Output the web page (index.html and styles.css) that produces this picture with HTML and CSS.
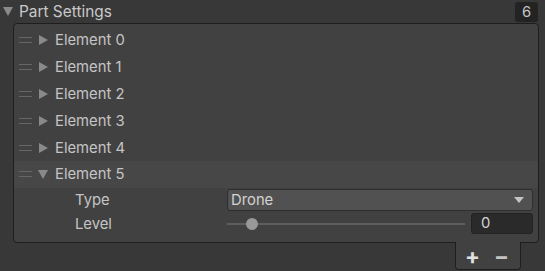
FILE: index.html
```html
<!DOCTYPE html>
<html lang="en">

<head>
    <meta charset="UTF-8">
    <title>Part Settings</title>
    <link rel="stylesheet" href="styles.css">
</head>

<body>
    <div class="header">
        <span class="fold open"></span>
        <span class="title">Part Settings</span>
        <span class="count">6</span>
    </div>

    <div class="list">
        <div class="row">
            <span class="handle"></span><span class="fold"></span><span class="label">Element 0</span>
        </div>
        <div class="row">
            <span class="handle"></span><span class="fold"></span><span class="label">Element 1</span>
        </div>
        <div class="row">
            <span class="handle"></span><span class="fold"></span><span class="label">Element 2</span>
        </div>
        <div class="row">
            <span class="handle"></span><span class="fold"></span><span class="label">Element 3</span>
        </div>
        <div class="row">
            <span class="handle"></span><span class="fold"></span><span class="label">Element 4</span>
        </div>
        <div class="row selected">
            <span class="handle"></span><span class="fold open"></span><span class="label">Element 5</span>
        </div>
        <div class="prop">
            <span class="prop-name">Type</span>
            <div class="dropdown">
                <span>Drone</span>
                <span class="caret"></span>
            </div>
        </div>
        <div class="prop">
            <span class="prop-name">Level</span>
            <div class="slider">
                <div class="track"></div>
                <div class="thumb"></div>
            </div>
            <div class="number">0</div>
        </div>
    </div>

    <div class="footer-wrap">
        <div class="footer">
            <span class="btn">+</span>
            <span class="btn minus">&minus;</span>
        </div>
    </div>
</body>

</html>
```

FILE: styles.css
```css
body {
    margin: 0;
    background-color: #383838;
    font-family: "Inter", "Noto Sans", sans-serif;
    font-size: 14.8px;
    color: #c4c4c4;
}

.header {
    height: 23px;
    display: flex;
    align-items: center;
    padding-left: 3px;
    padding-right: 7px;
}

.header .title {
    margin-left: 6px;
    flex: 1;
    font-size: 15.4px;
    color: #c8c8c8;
}

.count {
    width: 23px;
    height: 20px;
    background-color: #232323;
    border-radius: 3px;
    text-align: center;
    line-height: 20px;
    margin-top: 1px;
}

.fold {
    width: 0;
    height: 0;
    border-top: 5px solid transparent;
    border-bottom: 5px solid transparent;
    border-left: 9px solid #8a8a8a;
}

.fold.open {
    border-left: 5px solid transparent;
    border-right: 5px solid transparent;
    border-top: 9px solid #8a8a8a;
    border-bottom: 0;
}

.list {
    margin-left: 13px;
    width: 524px;
    height: 215px;
    background-color: #414141;
    border: 1px solid #1e1e1e;
    border-radius: 4px;
    padding-top: 3px;
    box-sizing: content-box;
}

.row {
    height: 26.8px;
    display: flex;
    align-items: center;
    padding-left: 5px;
}

.row.selected {
    background-color: #474747;
}

.handle {
    width: 13px;
    height: 4px;
    border-top: 1px solid #666;
    border-bottom: 1px solid #666;
    margin-right: 7px;
}

.row .fold.open {
    margin-left: -1px;
}

.label {
    margin-left: 7px;
}

.prop {
    height: 24px;
    display: flex;
    align-items: center;
    padding-left: 61px;
}

.prop-name {
    width: 152px;
}

.dropdown {
    width: 306px;
    height: 22px;
    background-color: #515151;
    border: 1px solid #2e2e2e;
    border-radius: 3px;
    display: flex;
    align-items: center;
    justify-content: space-between;
    padding-left: 3px;
    padding-right: 8px;
    box-sizing: border-box;
    color: #d2d2d2;
}

.caret {
    width: 0;
    height: 0;
    border-left: 5px solid transparent;
    border-right: 5px solid transparent;
    border-top: 6px solid #c4c4c4;
}

.slider {
    position: relative;
    width: 238px;
    height: 20px;
    margin-right: 6px;
}

.track {
    margin-top: 9px;
    height: 2px;
    background-color: #5e5e5e;
}

.thumb {
    position: absolute;
    left: 19px;
    top: 4px;
    width: 12px;
    height: 12px;
    border-radius: 50%;
    background-color: #999999;
}

.number {
    width: 62px;
    height: 21px;
    background-color: #2a2a2a;
    border: 1px solid #232323;
    border-radius: 3px;
    box-sizing: border-box;
    padding-left: 9px;
    line-height: 19px;
    color: #d2d2d2;
}

.footer-wrap {
    display: flex;
    justify-content: flex-end;
    padding-right: 24px;
}

.footer {
    width: 66px;
    height: 28px;
    margin-top: -1px;
    background-color: #414141;
    border: 1px solid #1e1e1e;
    border-top: 0;
    border-radius: 0 0 4px 4px;
    box-sizing: border-box;
    display: flex;
    align-items: center;
    justify-content: center;
    gap: 14px;
    padding-right: 2px;
}

.btn {
    font-size: 22px;
    font-weight: bold;
    color: #e0e0e0;
}

.btn.minus {
    color: #c4c4c4;
}
```
